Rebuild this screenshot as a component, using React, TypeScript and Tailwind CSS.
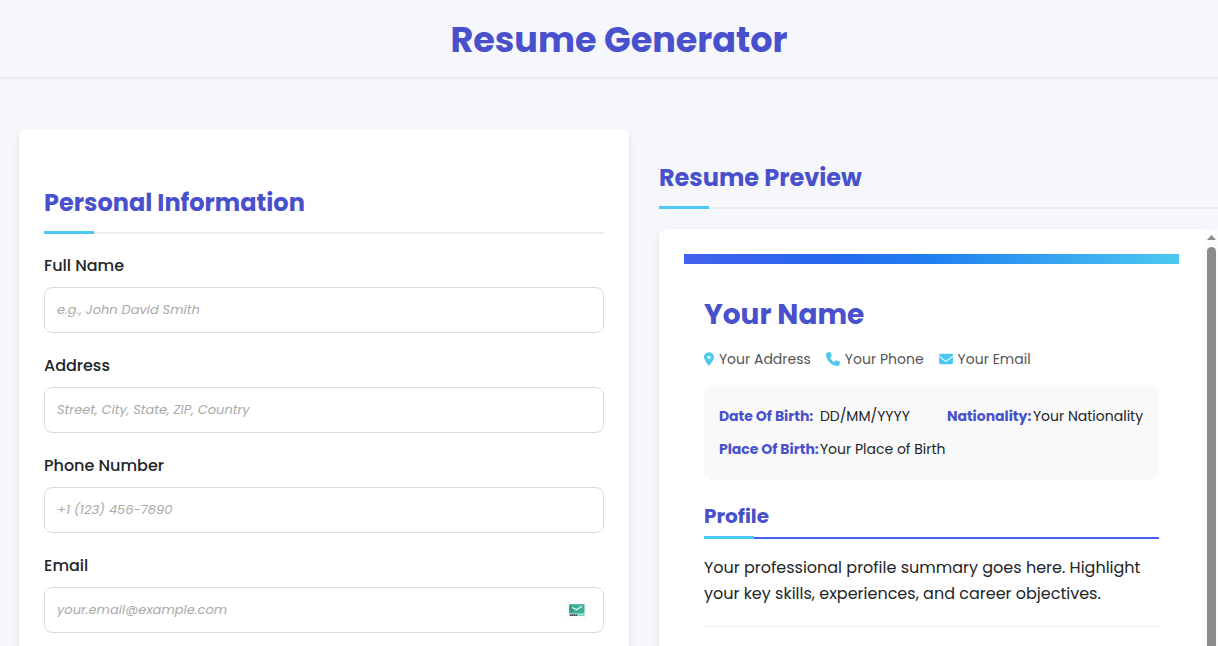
import { FaEnvelope, FaLocationDot, FaPhone } from "react-icons/fa6";

const fields = [
  { id: "name", label: "Full Name", placeholder: "e.g., John David Smith", type: "text" },
  { id: "address", label: "Address", placeholder: "Street, City, State, ZIP, Country", type: "text" },
  { id: "phone", label: "Phone Number", placeholder: "+1 (123) 456-7890", type: "tel" },
  { id: "email", label: "Email", placeholder: "your.email@example.com", type: "email" },
];

function SectionTitle({ children }: { children: string }) {
  return (
    <h2 className="relative mt-[30px] h-[50px] shrink-0 border-b-2 border-[#ebeced] text-2xl leading-[38px] font-bold whitespace-nowrap text-[#4851cb]">
      {children}
      <span className="absolute -bottom-0.5 left-0 h-[3px] w-[50px] bg-[#4cc9f0]" />
    </h2>
  );
}

function MailBadge() {
  return (
    <svg viewBox="0 0 20 20" className="size-5" aria-hidden="true">
      <rect width="20" height="20" rx="2" fill="#fafafa" />
      <path d="M2.3 4.2h15.2v9.4H2.3z" fill="#3fae97" />
      <path d="M2.3 4.2 8 9.4l-5.7 4.2z" fill="#349a87" />
      <path d="m5 7.4 4.5 2.4L15 6.2" fill="none" stroke="#e8fffa" strokeWidth="1.1" />
      <path d="M2.8 15.2h7.4" stroke="#33404a" strokeWidth="1.8" strokeDasharray="1.6 .3" />
      <path d="M10.4 15.2h7" stroke="#55ccb4" strokeWidth="1.8" strokeDasharray="1.6 .3" />
    </svg>
  );
}

export default function App() {
  return (
    <div className="flex h-screen flex-col overflow-hidden bg-[#f5f7fb] font-['Poppins','Inter',sans-serif] text-base text-[#212529]">
      <header className="border-b-2 border-[#ebeced] pt-3 pb-[9px] pl-5 text-center">
        <h1 className="text-[35px] leading-[56px] font-bold text-[#4851cb]">Resume Generator</h1>
      </header>
      <main className="grid min-h-0 flex-1 grid-cols-[12fr_11fr] gap-[30px] pt-[50px] pl-[19px]">
        <form className="min-w-0 rounded-t-lg bg-white p-[25px] shadow-[0_4px_6px_rgba(0,0,0,0.1)]">
          <SectionTitle>Personal Information</SectionTitle>
          <div className="mt-[19px] flex flex-col gap-5">
            {fields.map((f) => (
              <div key={f.id} className="flex flex-col gap-2">
                <label htmlFor={f.id} className="leading-[26px] font-medium">{f.label}</label>
                <div className="relative">
                  <input
                    id={f.id}
                    type={f.type}
                    placeholder={f.placeholder}
                    className="block h-[46px] w-full rounded-lg border border-[#dcdcdc] bg-white px-3 text-[13px] placeholder:text-[#aaa] placeholder:italic"
                  />
                  {f.id === "email" && (
                    <span className="absolute top-[13px] right-[17px]"><MailBadge /></span>
                  )}
                </div>
              </div>
            ))}
          </div>
        </form>
        <section className="flex min-h-0 min-w-0 flex-col">
          <SectionTitle>Resume Preview</SectionTitle>
          <div className="mt-5 flex min-h-0 flex-1 rounded-tl-lg bg-white shadow-[0_4px_6px_rgba(0,0,0,0.1)]">
            <article className="min-w-0 flex-1 overflow-hidden p-[25px]">
              <div className="h-2.5 bg-[linear-gradient(to_right,#4361ee,#2568ee_30%,#2080f0_50%,#4cc9f0)]" />
              <div className="px-5 pt-7">
                <h2 className="text-[28px] leading-[46px] font-bold text-[#4851cb]">Your Name</h2>
                <address className="mt-2.5 flex gap-[15px] text-sm leading-[22px] whitespace-nowrap text-[#555] not-italic">
                  <span className="flex items-center gap-[5px]"><FaLocationDot className="h-3.5 w-2.5 text-[#4cc9f0]" />Your Address</span>
                  <span className="flex items-center gap-[5px]"><FaPhone className="size-3.5 text-[#4cc9f0]" />Your Phone</span>
                  <span className="flex items-center gap-[5px]"><FaEnvelope className="size-3.5 text-[#4cc9f0]" />Your Email</span>
                </address>
                <dl className="mt-[15px] grid h-[95px] grid-cols-[100px_126px_85px_auto] content-start justify-start gap-x-px gap-y-[11px] rounded-lg bg-[#f9f9f9] p-[15px] pt-5 text-sm leading-[22px] whitespace-nowrap">
                  <dt className="font-bold text-[#4851cb]">Date Of Birth:</dt><dd>DD/MM/YYYY</dd>
                  <dt className="font-bold text-[#4851cb]">Nationality:</dt><dd>Your Nationality</dd>
                  <dt className="font-bold text-[#4851cb]">Place Of Birth:</dt><dd>Your Place of Birth</dd>
                </dl>
                <h3 className="relative mt-5 h-[39px] border-b-2 border-[#4361ee] text-xl leading-8 font-bold text-[#4851cb]">
                  Profile
                  <span className="absolute -bottom-0.5 left-0 h-[3px] w-[50px] bg-[#4cc9f0]" />
                </h3>
                <p className="mt-4 border-b border-[#eee] pb-[19px] leading-[26px]">
                  Your professional profile summary goes here. Highlight your key skills, experiences, and career objectives.
                </p>
              </div>
            </article>
            <div className="flex w-3.5 shrink-0 flex-col items-center bg-[#fcfcfc] pt-1.5" aria-hidden="true">
              <svg viewBox="0 0 9 5" className="h-[5px] w-[9px]"><path d="M4.5 0 9 5H0z" fill="#8b8b8b" /></svg>
              <div className="mt-[7px] w-[9px] flex-1 rounded-t-full bg-[#8b8b8b]" />
            </div>
          </div>
        </section>
      </main>
    </div>
  );
}
